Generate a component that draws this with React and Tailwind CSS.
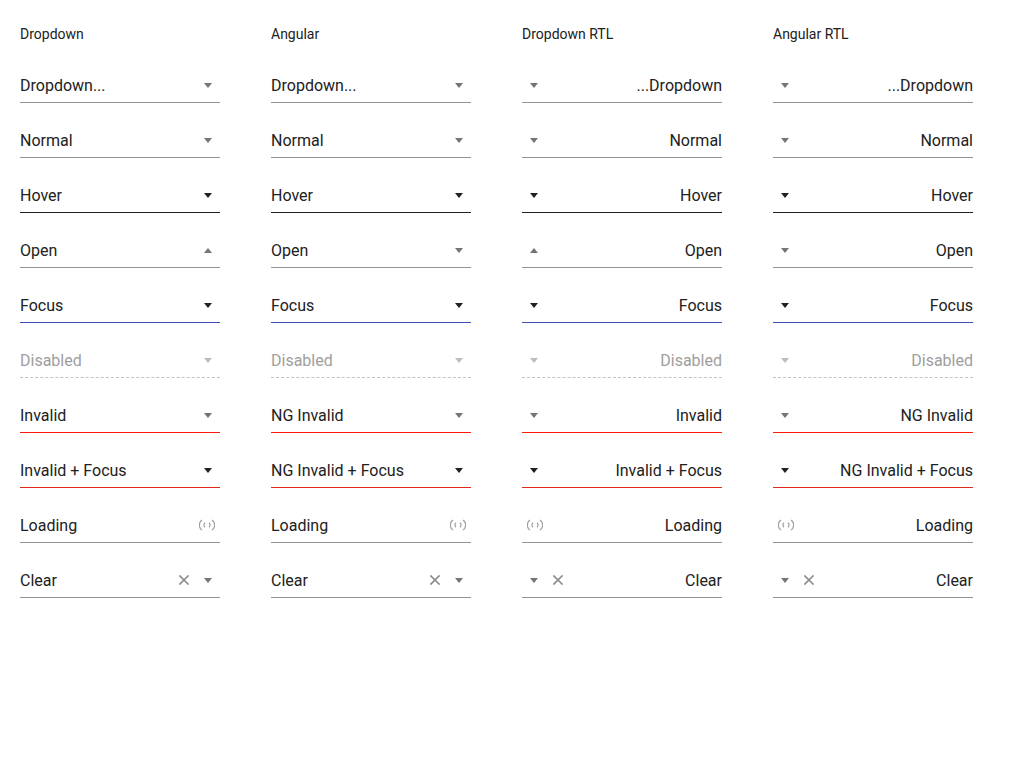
import React from 'react';

const font = { fontFamily: 'Roboto, "Liberation Sans", sans-serif' };

const rows = [
  { key: 'placeholder', label: 'Dropdown...', rtlLabel: '...Dropdown', state: 'placeholder' },
  { key: 'normal', label: 'Normal', state: 'normal' },
  { key: 'hover', label: 'Hover', state: 'hover' },
  { key: 'open', label: 'Open', state: 'open' },
  { key: 'focus', label: 'Focus', state: 'focus' },
  { key: 'disabled', label: 'Disabled', state: 'disabled' },
  { key: 'invalid', label: 'Invalid', ngLabel: 'NG Invalid', state: 'invalid' },
  { key: 'invalidFocus', label: 'Invalid + Focus', ngLabel: 'NG Invalid + Focus', state: 'invalidFocus' },
  { key: 'loading', label: 'Loading', state: 'loading' },
  { key: 'clear', label: 'Clear', state: 'clear' },
];

const columns = [
  { title: 'Dropdown', angular: false, rtl: false },
  { title: 'Angular', angular: true, rtl: false },
  { title: 'Dropdown RTL', angular: false, rtl: true },
  { title: 'Angular RTL', angular: true, rtl: true },
];

function Arrow({ up, dark, faded }) {
  const color = faded ? '#bdbdbd' : dark ? '#212121' : '#757575';
  return (
    <svg width="8" height="5" viewBox="0 0 8 5" className="shrink-0">
      {up ? <path d="M0 5 L4 0 L8 5 Z" fill={color} /> : <path d="M0 0 L8 0 L4 5 Z" fill={color} />}
    </svg>
  );
}

function ClearIcon() {
  return (
    <svg width="10" height="10" viewBox="0 0 10 10" className="shrink-0">
      <path d="M1 1 L9 9 M9 1 L1 9" stroke="#8a8a8a" strokeWidth="1.6" strokeLinecap="square" />
    </svg>
  );
}

function Spinner() {
  return (
    <svg width="16" height="12" viewBox="0 0 16 12" className="shrink-0">
      <g fill="none" stroke="#9e9e9e" strokeWidth="1.2">
        <path d="M3 1 A6 6 0 0 0 3 11" />
        <path d="M13 1 A6 6 0 0 1 13 11" />
        <path d="M6 3.8 A2.8 2.8 0 0 0 6 8.2" />
        <path d="M10 3.8 A2.8 2.8 0 0 1 10 8.2" />
      </g>
    </svg>
  );
}

function Field({ row, angular, rtl }) {
  const s = row.state;
  let label = row.label;
  if (rtl && row.rtlLabel) label = row.rtlLabel;
  if (angular && row.ngLabel) label = row.ngLabel;

  const open = s === 'open' && !angular;
  const dark = s === 'hover' || s === 'focus' || s === 'invalidFocus';

  const line = {
    placeholder: 'border-b border-[#949494]',
    normal: 'border-b border-[#949494]',
    hover: 'border-b border-[#212121]',
    open: 'border-b border-[#949494]',
    focus: 'border-b border-[#3f51b5]',
    disabled: 'border-b border-dashed border-[#c4c4c4]',
    invalid: 'border-b border-[#ff1a0d]',
    invalidFocus: 'border-b border-[#e0281c]',
    loading: 'border-b border-[#949494]',
    clear: 'border-b border-[#949494]',
  }[s];

  let icons;
  if (s === 'loading') {
    icons = (
      <div className={rtl ? 'pl-[5px]' : 'pr-[5px]'}>
        <Spinner />
      </div>
    );
  } else if (s === 'clear') {
    icons = (
      <div className={`flex items-center gap-[15px] ${rtl ? 'flex-row-reverse pl-2' : 'pr-2'}`}>
        <ClearIcon />
        <Arrow />
      </div>
    );
  } else {
    icons = (
      <div className={rtl ? 'pl-2' : 'pr-2'}>
        <Arrow up={open} dark={dark} faded={s === 'disabled'} />
      </div>
    );
  }

  return (
    <div className={`h-[55px] flex items-end pb-[5px] ${line}`}>
      <div className={`w-full flex items-center h-6 ${rtl ? 'flex-row-reverse' : ''}`}>
        <span
          className={`flex-1 text-base leading-6 whitespace-nowrap translate-y-px ${rtl ? 'text-right' : ''} ${
            s === 'disabled' ? 'text-[#9e9e9e]' : 'text-[#212121]'
          }`}
        >
          {label}
        </span>
        {icons}
      </div>
    </div>
  );
}

export default function App() {
  return (
    <div className="w-[1024px] h-[768px] bg-white px-5 pt-6" style={font}>
      <div className="flex gap-[51px]">
        {columns.map((col) => (
          <div key={col.title} className="w-[200px] flex flex-col">
            <div className="h-6 pb-1 text-sm leading-5 text-[#212121]">{col.title}</div>
            {rows.map((row) => (
              <Field key={row.key} row={row} angular={col.angular} rtl={col.rtl} />
            ))}
          </div>
        ))}
      </div>
    </div>
  );
}
